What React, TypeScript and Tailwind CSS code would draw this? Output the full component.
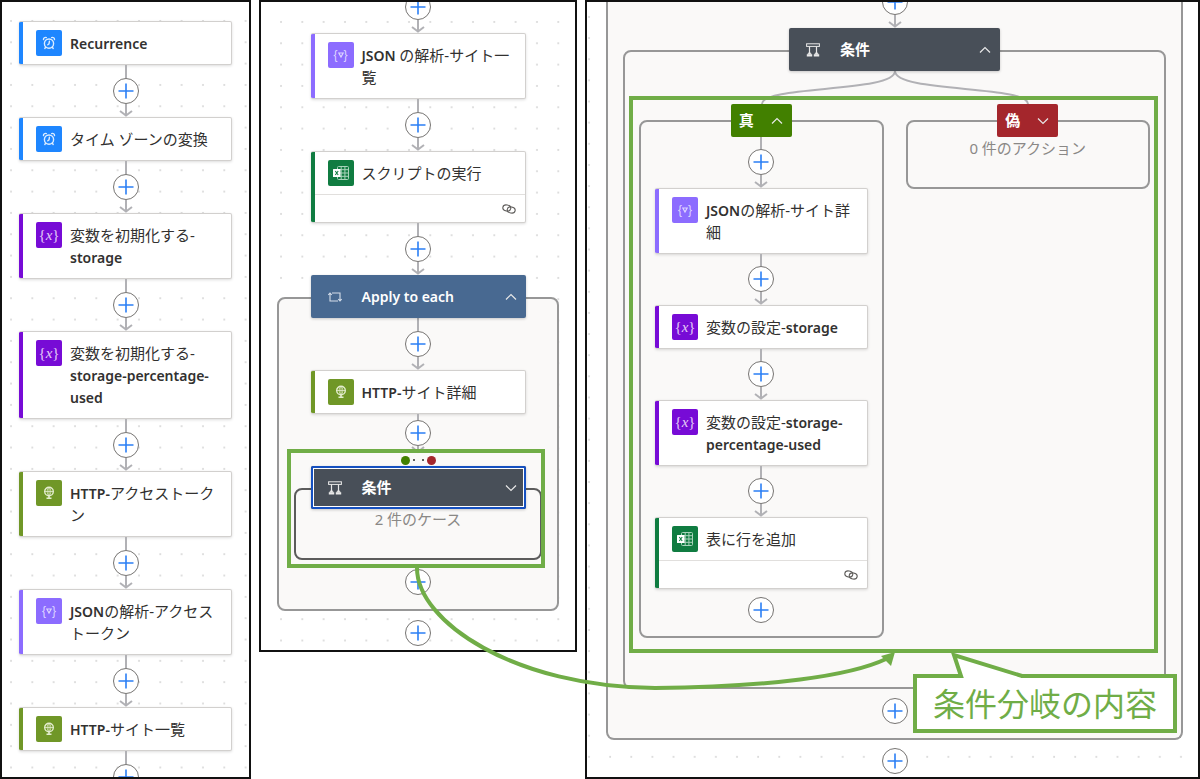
import React from 'react';

type IconKind = 'clock' | 'variable' | 'http' | 'json' | 'excel';

interface ActionProps {
  kind: IconKind;
  title: string;
  linked?: boolean;
}

const ICON_BG: Record<IconKind, string> = {
  clock: 'bg-[#1e86ff]',
  variable: 'bg-[#770bd6]',
  http: 'bg-[#709727]',
  json: 'bg-[#8c6cff]',
  excel: 'bg-[#107c41]',
};

const MAIN_FLOW: ActionProps[] = [
  { kind: 'clock', title: 'Recurrence' },
  { kind: 'clock', title: 'タイム ゾーンの変換' },
  { kind: 'variable', title: '変数を初期化する-\nstorage' },
  { kind: 'variable', title: '変数を初期化する-\nstorage-percentage-\nused' },
  { kind: 'http', title: 'HTTP-アクセストーク\nン' },
  { kind: 'json', title: 'JSONの解析-アクセス\nトークン' },
  { kind: 'http', title: 'HTTP-サイト一覧' },
];

const TRUE_FLOW: ActionProps[] = [
  { kind: 'json', title: 'JSONの解析-サイト詳\n細' },
  { kind: 'variable', title: '変数の設定-storage' },
  { kind: 'variable', title: '変数の設定-storage-\npercentage-used' },
  { kind: 'excel', title: '表に行を追加', linked: true },
];

const ActionIcon = ({ kind }: { kind: IconKind }) => {
  if (kind === 'variable') {
    return (
      <span className="font-['Liberation_Serif',serif] text-[15px] leading-none text-[#e4ccf7]">
        {'{'}<i>x</i>{'}'}
      </span>
    );
  }
  if (kind === 'json') {
    return (
      <span className="flex items-center font-['Liberation_Sans',sans-serif] text-[12px] leading-none text-[#ded5ff]">
        {'{'}
        <svg width="6" height="6" viewBox="0 0 6 6" fill="none" stroke="currentColor" strokeWidth="1.2"><path d="M.8 1h4.4L3 5z" /></svg>
        {'}'}
      </span>
    );
  }
  if (kind === 'clock') {
    return (
      <svg width="14" height="14" viewBox="0 0 14 14" fill="none" stroke="#dcecff" strokeWidth="1.4" strokeLinecap="round">
        <circle cx="7" cy="7.6" r="4.6" />
        <path d="M7.4 5.3 7 7.9l-1.2.9M1.5 3.6a2 2 0 0 1 2.8-2M12.5 3.6a2 2 0 0 0-2.8-2M3.7 11.2l-.9 1.3M10.3 11.2l.9 1.3" />
      </svg>
    );
  }
  if (kind === 'http') {
    return (
      <svg width="14" height="16" viewBox="0 0 14 16" fill="none" stroke="#e3ecce" strokeWidth="1.1">
        <circle cx="7" cy="6.500" r="4.300" strokeWidth="1.4" />
        <path d="M2.700 6.500h8.600M7 2.200v8.600M7 2.200C4.600 4.500 4.600 8.500 7 10.800M7 2.200C9.400 4.500 9.400 8.500 7 10.800" strokeWidth=".8" />
        <path d="M7 11v1.500M4.500 13.200h5" strokeWidth="1.6" />
      </svg>
    );
  }
  return (
    <svg width="18" height="16" viewBox="0 0 18 16" fill="none" stroke="#a9d3bb">
      <rect x="5.500" y="1.500" width="11" height="13" rx="1" />
      <path d="M5.500 4.700h11M8 8h8.500M5.500 11.300h11M9.200 1.500v13M12.900 1.500v13" />
      <rect x="1" y="4" width="7.500" height="8" rx=".6" fill="#fff" stroke="none" />
      <path d="m3.300 6 2.900 4M6.200 6l-2.900 4" stroke="#107c41" strokeWidth="1.100" />
    </svg>
  );
};

// Latin runs are set a size smaller than the Japanese text around them
const Line = ({ text }: { text: string }) => (
  <>
    {text.split(/([A-Za-z][A-Za-z -]*)/).map((part, i) =>
      i % 2 ? <span key={i} className="text-[14px] font-semibold leading-none">{part}</span> : part
    )}
  </>
);

const Title = ({ text }: { text: string }) => (
  <div className="py-0.5 text-[15px] leading-[22px] text-[#323130]">
    {text.split('\n').map(line => (
      <div key={line} className="h-[22px] whitespace-pre"><Line text={line} /></div>
    ))}
  </div>
);

const Action = ({ kind, title, linked }: ActionProps) => (
  <div className="flex w-full overflow-hidden rounded-[2px] border border-l-0 border-[#d2d0ce] bg-white shadow-[0_1px_3px_rgba(0,0,0,0.14)]">
    <div className={`-my-px w-1 shrink-0 ${ICON_BG[kind]}`} />
    <div className="min-w-0 flex-1">
      <div className="flex items-start gap-2 py-2 pl-[13px]">
        <div className={`flex size-[26px] shrink-0 items-center justify-center rounded-[2px] ${ICON_BG[kind]}`}>
          <ActionIcon kind={kind} />
        </div>
        <Title text={title} />
      </div>
      {linked && (
        <div className="flex h-[28px] items-center justify-end border-t border-[#e1dfdd] pr-[9px]">
          <svg width="14" height="10" viewBox="0 0 14 10" fill="none" stroke="#605e5c" strokeWidth="1.1">
            <ellipse cx="4.800" cy="4" rx="4" ry="3" transform="rotate(10 4.800 4)" />
            <ellipse cx="9.200" cy="6" rx="4" ry="3" transform="rotate(10 9.200 6)" />
          </svg>
        </div>
      )}
    </div>
  </div>
);

const AddButton = () => (
  <button type="button" aria-label="追加" className="flex size-[26px] shrink-0 items-center justify-center rounded-full border border-[#767472] bg-white">
    <svg width="16" height="16" viewBox="0 0 16 16" stroke="#2b7ff5" strokeWidth="1.6"><path d="M8 .5v15M.5 8h15" /></svg>
  </button>
);

const Connector = ({ height = 'h-[52px]' }: { height?: string }) => (
  <div className={`flex shrink-0 flex-col items-center ${height}`}>
    <div className="w-0.5 flex-1 bg-[#b1b1b5]" />
    <AddButton />
    <svg width="14" height="13" viewBox="0 0 14 13" fill="none" stroke="#b1b1b5" strokeWidth="2"><path d="M7 0v12M1 7l6 4.500 6-4.500" /></svg>
  </div>
);

const Chevron = ({ open }: { open: boolean }) => (
  <svg width="14" height="14" viewBox="0 0 14 14" fill="none" stroke="#e8e8e8" strokeWidth="1.2">
    <path d={open ? 'm2 9.500 5-5 5 5' : 'm2 4.500 5 5 5-5'} />
  </svg>
);

const LoopIcon = () => (
  <svg width="14" height="14" viewBox="0 0 14 14" fill="none" stroke="#d5deea" strokeWidth="1.1">
    <path d="M4 3h8v8M10 11H2V3M.2 5 2 3l1.800 2M10.200 9 12 11l1.800-2" />
  </svg>
);

const ConditionIcon = () => (
  <svg width="14" height="14" viewBox="0 0 14 14" fill="none" stroke="#e8e8e8">
    <rect x=".6" y=".8" width="12.800" height="2.600" strokeWidth="1" />
    <path d="M3.500 3.500v7M10.500 3.500v7" strokeWidth="1.200" />
    <path d="M1.300 11.500 3.500 9l2.200 2.500zM8.300 11.500 10.500 9l2.200 2.500z" fill="#e8e8e8" strokeWidth=".6" />
    <path d="M.8 12.500h5.400M7.800 12.500h5.400" strokeWidth="2" />
  </svg>
);

interface ScopeHeaderProps {
  icon: React.ReactNode;
  title: string;
  open: boolean;
  className: string;
}

const ScopeHeader = ({ icon, title, open, className }: ScopeHeaderProps) => (
  <button type="button" aria-expanded={open} className={`relative z-10 flex h-[43px] items-center rounded-[2px] pl-[17px] pr-2 text-[15px] font-semibold text-white shadow-[0_1px_3px_rgba(0,0,0,0.2)] ${className}`}>
    {icon}
    <span className="ml-5 flex-1 text-left"><Line text={title} /></span>
    <Chevron open={open} />
  </button>
);

const BranchHeader = ({ title, open, className }: { title: string; open: boolean; className: string }) => (
  <button type="button" aria-expanded={open} className={`relative z-10 flex h-[33px] w-[61px] items-center justify-between rounded-[2px] px-2 text-[15px] font-semibold text-white ${className}`}>
    {title}
    <Chevron open={open} />
  </button>
);

const Dots = ({ id, x, y, pitch }: { id: string; x: number; y: number; pitch: number }) => (
  <svg className="absolute inset-0 -z-10 size-full" aria-hidden="true">
    <pattern id={id} x={x} y={y} width={pitch} height={pitch} patternUnits="userSpaceOnUse">
      <circle cx="2" cy="2" r="1" fill="#d4d4d4" />
    </pattern>
    <rect width="100%" height="100%" fill={`url(#${id})`} />
  </svg>
);

const Panel = ({ className = '', children }: { className?: string; children: React.ReactNode }) => (
  <section className={`relative isolate flex flex-col overflow-hidden border-2 border-[#111] bg-white ${className}`}>
    {children}
  </section>
);

const App: React.FC = () => {
  return (
    <main className="relative grid h-screen grid-cols-[251fr_318fr_615fr] gap-2 overflow-hidden bg-white font-['Noto_Sans','Noto_Sans_CJK_JP',sans-serif]">
      <Panel className="items-center pt-[19px]">
        <Dots id="dots-main" x={7} y={17} pitch={21.33} />
        <div className="flex w-[213px] flex-col items-center">
          {MAIN_FLOW.map(action => (
            <React.Fragment key={action.title}>
              <Action {...action} />
              <Connector />
            </React.Fragment>
          ))}
        </div>
      </Panel>

      <Panel className="items-center self-start pb-1">
        <Dots id="dots-loop" x={18} y={18} pitch={21.33} />
        <div className="-mt-[21px] flex w-[215px] flex-col items-center">
          <Connector />
          <Action kind="json" title={'JSON の解析-サイト一\n覧'} />
          <Connector />
          <Action kind="excel" title="スクリプトの実行" linked />
          <Connector />
        </div>

        <ScopeHeader icon={<LoopIcon />} title="Apply to each" open className="w-[215px] bg-[#486991]" />
        <div className="-mt-[21px] flex w-[282px] flex-col items-center rounded-lg border-2 border-[#979797] bg-[#faf9f8] pb-[14px] pt-[19px]">
          <Connector />
          <div className="w-[215px]">
            <Action kind="http" title="HTTP-サイト詳細" />
          </div>
          <div className="h-1.5 w-0.5 bg-[#b1b1b5]" />
          <AddButton />
          <svg width="14" height="8" viewBox="0 0 14 8" fill="none" stroke="#b1b1b5" strokeWidth="2"><path d="M7 0v7M1 1l6 5 6-5" /></svg>

          {/* run-after status of the two cases */}
          <div className="flex h-3 items-center gap-[3px]">
            <span className="size-[9px] rounded-full bg-[#428000]" />
            <span className="size-0.5 bg-[#605e5c]" />
            <span className="ml-1 size-0.5 bg-[#605e5c]" />
            <span className="size-[9px] rounded-full bg-[#a4262c]" />
          </div>

          <div className="relative flex w-[248px] flex-col items-center">
            <ScopeHeader
              icon={<ConditionIcon />}
              title="条件"
              open={false}
              className="w-[215px] bg-[#484f58] ring-2 ring-[#1550c0] ring-inset after:absolute after:inset-[2px] after:border after:border-white"
            />
            <div className="-mt-[21px] h-[72px] w-full rounded-lg border-2 border-[#5c5c5c] pt-[18px] text-center text-[15px] leading-[22px] text-[#8a8886]">
              2 件のケース
            </div>
            <div className="absolute -bottom-2 -left-[7px] -right-[3px] -top-[17px] border-4 border-[#70ad47]" />
          </div>

          <div className="mt-[9px]">
            <AddButton />
          </div>
        </div>
        <div className="mt-[9px]">
          <AddButton />
        </div>
      </Panel>

      <Panel>
        <Dots id="dots-branch" x={0} y={13} pitch={21.14} />
        <div className="ml-[19px] mr-[15px] flex flex-col items-center">
          <div className="relative flex w-full flex-col items-center rounded-b-lg border-x-2 border-b-2 border-[#979797] bg-[#faf9f8] px-[15px] pb-[14px]">
            <div className="-mt-[26px]">
              <Connector />
            </div>
            <ScopeHeader icon={<ConditionIcon />} title="条件" open className="w-[211px] bg-[#484f58]" />
            <div className="-mt-[21px] flex w-full flex-col items-center rounded-lg border-2 border-[#979797] px-[14px] pb-[49px] pt-[19px]">
              <svg width="270" height="33" viewBox="0 0 270 33" fill="none" stroke="#b1b1b5" strokeWidth="2">
                <path d="M135 0C135 22 2 14 2 33M135 0c0 22 133 14 133 33" />
              </svg>
              <div className="relative grid w-full grid-cols-2 items-start gap-[22px]">
                <div className="flex flex-col items-center">
                  <BranchHeader title="真" open className="bg-[#428000]" />
                  <div className="-mt-[17px] flex w-full flex-col items-center rounded-lg border-2 border-[#979797] px-[14px] pb-[13px] pt-[15px]">
                    {TRUE_FLOW.map(action => (
                      <React.Fragment key={action.title}>
                        <Connector height="h-[51px]" />
                        <Action {...action} />
                      </React.Fragment>
                    ))}
                    <div className="mt-2">
                      <AddButton />
                    </div>
                  </div>
                </div>
                <div className="flex flex-col items-center">
                  <BranchHeader title="偽" open={false} className="bg-[#a4262c]" />
                  <div className="-mt-[17px] h-[69px] w-full rounded-lg border-2 border-[#979797] pt-[15px] text-center text-[15px] leading-[22px] text-[#8a8886]">
                    0 件のアクション
                  </div>
                </div>
                <div className="pointer-events-none absolute -bottom-[15px] -left-[10px] -right-2 -top-2 border-4 border-[#70ad47]" />
              </div>
            </div>
            <div className="mt-[9px]">
              <AddButton />
            </div>

            <div className="absolute bottom-[5px] right-1 z-20 border-4 border-[#70ad47] bg-white px-4 py-1 text-[32px] leading-[43px] text-[#70ad47]">
              条件分岐の内容
              <svg className="absolute -top-7 left-8" width="80" height="30" viewBox="0 0 80 30" fill="none" stroke="#70ad47" strokeWidth="4">
                <path d="m5 6 8 22h59v-2z" fill="#fff" stroke="none" />
                <path d="M8 26h4L5 5l68 21h5" />
              </svg>
            </div>
          </div>
          <div className="mt-2">
            <AddButton />
          </div>
        </div>
      </Panel>

      {/* arrow from the collapsed condition to its expanded branches */}
      <svg className="pointer-events-none absolute inset-0 size-full" viewBox="0 0 1200 779" preserveAspectRatio="none" fill="none" aria-hidden="true">
        <path d="M417 568C417 622 515 687 655 688C770 687 850 676 886 659" stroke="#70ad47" strokeWidth="4" />
        <path d="m895 652-14 4 4 4 6 6z" fill="#70ad47" />
      </svg>
    </main>
  );
};

export default App;
